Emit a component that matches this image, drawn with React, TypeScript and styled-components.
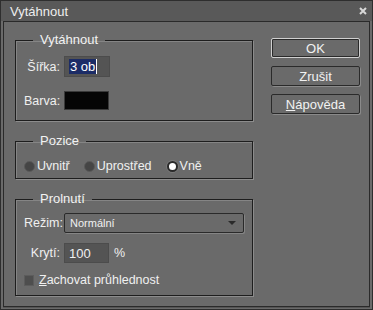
import * as React from 'react';
import styled, { createGlobalStyle } from 'styled-components';

const GlobalStyle = createGlobalStyle`
  html, body {
    margin: 0;
    padding: 0;
    background: #6a6a6a;
  }
  body {
    font-family: "Liberation Sans", Arial, sans-serif;
    font-size: 12.5px;
    color: #f0f0f0;
  }
`

const Window = styled.div`
  width: 373px;
  height: 310px;
  box-sizing: border-box;
  background: #6a6a6a;
  border: 1px solid #2e2e2e;
  display: flex;
  flex-direction: column;
`

const TitleBar = styled.div`
  height: 20px;
  flex: none;
  display: flex;
  align-items: center;
  justify-content: space-between;
  padding: 0 5px 0 9px;
  background: #595959;
  font-size: 13px;
  color: #eeeeee;
`

const CloseIcon = () => (
  <svg width="8" height="8" viewBox="0 0 8 8">
    <path d="M1 1 L7 7 M7 1 L1 7" stroke="#d8d8d8" strokeWidth="2" />
  </svg>
)

const Body = styled.div`
  flex: 1;
  margin: 0 2px 2px 2px;
  border: 1px solid #2a2a2a;
  box-shadow: 0 1px 0 #555;
  display: flex;
  padding: 11px 0 0 11px;
`

const LeftColumn = styled.div`
  width: 238px;
  display: flex;
  flex-direction: column;
  gap: 13px;
`

const ButtonColumn = styled.div`
  width: 89px;
  margin-left: 18px;
  padding-top: 5px;
  display: flex;
  flex-direction: column;
  gap: 8px;
`

const Group = styled.fieldset<{ $pt: number; $pb: number; $gap: number }>`
  margin: 0;
  min-width: 0;
  border: 1px solid #1e1e1e;
  box-shadow: 1px 1px 0 #8c8c8c, inset 1px 1px 0 #858585;
  padding: ${p => p.$pt}px 8px ${p => p.$pb}px 8px;
  display: flex;
  flex-direction: column;
  gap: ${p => p.$gap}px;
`

const Legend = styled.legend`
  margin-left: 9px;
  padding: 0 7px;
  font-size: 13px;
  line-height: 14px;
  color: #f2f2f2;
`

const Row = styled.div<{ $h: number }>`
  height: ${p => p.$h}px;
  display: flex;
  align-items: center;
  gap: 4px;
`

const Label = styled.span`
  width: 36px;
  flex: none;
  text-align: right;
  white-space: nowrap;
`

const TextBox = styled.div<{ $w: number }>`
  width: ${p => p.$w}px;
  height: 100%;
  box-sizing: border-box;
  background: #545454;
  border: 1px solid #4c4c4c;
  display: flex;
  align-items: center;
  padding-left: 4px;
  font-size: 13px;
`

const Selected = styled.span`
  background: #1c2c66;
  color: #ffffff;
  padding: 0 1px;
  line-height: 15px;
`

const Caret = styled.span`
  width: 1px;
  height: 15px;
  background: #ffffff;
`

const Swatch = styled.div`
  width: 45px;
  height: 100%;
  background: #050505;
  border: 1px solid #3a3a3a;
  box-sizing: border-box;
`

const Select = styled.div`
  flex: 1;
  height: 100%;
  box-sizing: border-box;
  border: 1px solid #2a2a2a;
  border-radius: 2px;
  box-shadow: 1px 1px 0 #858585;
  display: flex;
  align-items: center;
  justify-content: space-between;
  padding: 0 7px 0 5px;
  font-size: 11px;
`

const Arrow = styled.span`
  width: 0;
  height: 0;
  border-left: 4px solid transparent;
  border-right: 4px solid transparent;
  border-top: 4px solid #2a2a2a;
`

const Percent = styled.span`
  margin-left: 1px;
`

const RadioRow = styled.div`
  height: 16px;
  display: flex;
  align-items: center;
`

const RadioItem = styled.label<{ $mr: number }>`
  display: flex;
  align-items: center;
  gap: 2px;
  margin-right: ${p => p.$mr}px;
`

const RadioDot = styled.span<{ $on?: boolean }>`
  width: 11px;
  height: 11px;
  box-sizing: border-box;
  border-radius: 50%;
  background: ${p => (p.$on ? '#ffffff' : '#454545')};
  border: ${p => (p.$on ? '2px solid #2a2a2a' : '1px solid #5a5a5a')};
  box-shadow: ${p => (p.$on ? '0 0 0 1px #7a7a7a' : 'none')};
`

const CheckRow = styled.label`
  height: 14px;
  display: flex;
  align-items: center;
  gap: 5px;
`

const CheckBox = styled.span`
  width: 10px;
  height: 11px;
  background: #4e4e4e;
  border: 1px solid #5c5c5c;
  box-sizing: border-box;
`

const Button = styled.button<{ $default?: boolean }>`
  height: 20px;
  width: 89px;
  box-sizing: border-box;
  background: #6a6a6a;
  border: 1px solid ${p => (p.$default ? '#d0d0d0' : '#2a2a2a')};
  border-radius: 2px;
  box-shadow: ${p => (p.$default ? 'inset 0 0 0 1px #2a2a2a' : '1px 1px 0 #8a8a8a')};
  color: #f2f2f2;
  font-family: "Liberation Sans", Arial, sans-serif;
  font-size: 13px;
  padding: 0;
`

export default function App() {
  return (
    <>
      <GlobalStyle />
      <Window>
        <TitleBar>
          <span>Vytáhnout</span>
          <CloseIcon />
        </TitleBar>
        <Body>
          <LeftColumn>
            <Group $pt={9} $pb={10} $gap={14}>
              <Legend>Vytáhnout</Legend>
              <Row $h={21}>
                <Label>Šířka:</Label>
                <TextBox $w={46}>
                  <Selected>3 ob</Selected>
                  <Caret />
                </TextBox>
              </Row>
              <Row $h={19}>
                <Label>Barva:</Label>
                <Swatch />
              </Row>
            </Group>
            <Group $pt={10} $pb={4} $gap={0}>
              <Legend>Pozice</Legend>
              <RadioRow>
                <RadioItem $mr={14}><RadioDot />Uvnitř</RadioItem>
                <RadioItem $mr={15}><RadioDot />Uprostřed</RadioItem>
                <RadioItem $mr={0}><RadioDot $on />Vně</RadioItem>
              </RadioRow>
            </Group>
            <Group $pt={7} $pb={8} $gap={10}>
              <Legend>Prolnutí</Legend>
              <Row $h={20}>
                <Label>Režim:</Label>
                <Select>
                  <span>Normální</span>
                  <Arrow />
                </Select>
              </Row>
              <Row $h={20}>
                <Label>Krytí:</Label>
                <TextBox $w={45}>100</TextBox>
                <Percent>%</Percent>
              </Row>
              <CheckRow>
                <CheckBox />
                <span><u>Z</u>achovat průhlednost</span>
              </CheckRow>
            </Group>
          </LeftColumn>
          <ButtonColumn>
            <Button $default>OK</Button>
            <Button>Zrušit</Button>
            <Button><u>N</u>ápověda</Button>
          </ButtonColumn>
        </Body>
      </Window>
    </>
  );
}
